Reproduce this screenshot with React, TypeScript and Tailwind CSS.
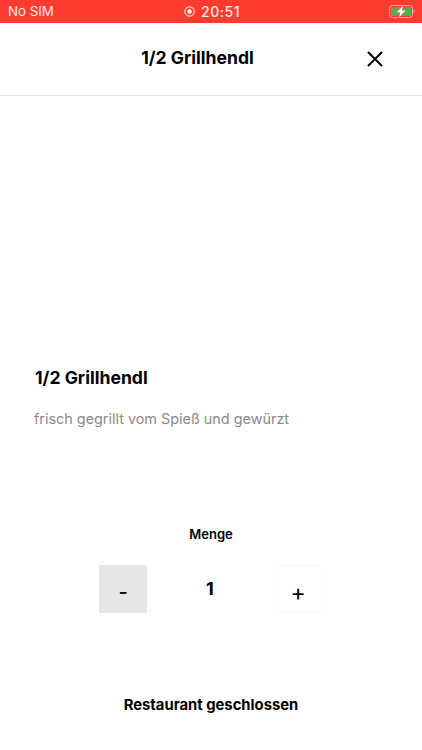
export default function App() {
  return (
    <div className="w-[422px] h-[750px] bg-white flex flex-col overflow-hidden font-['Inter','Liberation_Sans',sans-serif]">
      {/* Status bar */}
      <div className="h-[23px] shrink-0 bg-[#ff3b30] flex items-center justify-between pl-2 pr-[7px] text-white/90">
        <span className="w-[100px] text-[13.3px] leading-none">No SIM</span>
        <div className="flex items-center gap-[6px] pl-[1px]">
          <svg width="11" height="11" viewBox="0 0 11 11">
            <circle cx="5.5" cy="5.5" r="4.7" fill="none" stroke="white" strokeWidth="1" />
            <circle cx="5.5" cy="5.5" r="2.2" fill="white" />
          </svg>
          <span className="text-sm leading-none font-medium tracking-[0.5px]">20:51</span>
        </div>
        <div className="w-[100px] flex justify-end">
          <svg width="26" height="13" viewBox="0 0 26 13">
            <rect x="0.5" y="0.5" width="23" height="12" rx="3" fill="none" stroke="#ffaaa4" strokeWidth="1" />
            <rect x="2" y="2" width="20" height="9" rx="1.6" fill="#4cb050" />
            <path d="M24.6 4.5 C25.8 5 25.8 8 24.6 8.5 Z" fill="#ffaaa4" />
            <path d="M14.5 0 L7.2 7.6 H11 L9.6 13 L17 5.2 H13 Z" fill="white" stroke="#ff3b30" strokeWidth="0.4" />
          </svg>
        </div>
      </div>

      {/* Header */}
      <div className="h-[73px] shrink-0 border-b border-[#e3e3e3] flex items-center relative">
        <h1 className="w-[395px] text-center text-[17.6px] font-bold text-black leading-none mb-[2px]">1/2 Grillhendl</h1>
        <button className="absolute left-[366px] top-[27px]">
          <svg width="18" height="18" viewBox="0 0 18 18" fill="none" stroke="black" strokeWidth="2">
            <path d="M2 2 L16 16 M16 2 L2 16" />
          </svg>
        </button>
      </div>

      {/* Content */}
      <div className="px-[34px] pt-[271px]">
        <h2 className="pl-px text-[17.6px] font-bold text-black leading-[22px]">1/2 Grillhendl</h2>
        <p className="mt-[20px] text-[14.4px] leading-[20px] text-[#8a8a8a]">frisch gegrillt vom Spieß und gewürzt</p>
      </div>

      {/* Quantity */}
      <div className="flex flex-col items-center pt-[97px]">
        <span className="text-[13px] leading-4 font-semibold text-black">Menge</span>
        <div className="mt-[23px] w-[224px] flex items-center justify-between">
          <button className="w-[48px] h-[48px] bg-[#e6e6e6] rounded-[2px] flex items-center justify-center text-black text-xl font-medium pt-[5px]">-</button>
          <span className="text-lg font-bold text-black leading-none mb-[1px] pr-[2px]">1</span>
          <button className="w-[48px] h-[48px] bg-white border border-[#fafafa] rounded-[2px] flex items-center justify-center text-black text-[23px] leading-none pt-[9px] pr-[2px]">+</button>
        </div>
      </div>

      {/* Footer */}
      <div className="flex justify-center pt-[82px]">
        <span className="text-[14.8px] leading-5 font-bold text-black">Restaurant geschlossen</span>
      </div>
    </div>
  );
}
